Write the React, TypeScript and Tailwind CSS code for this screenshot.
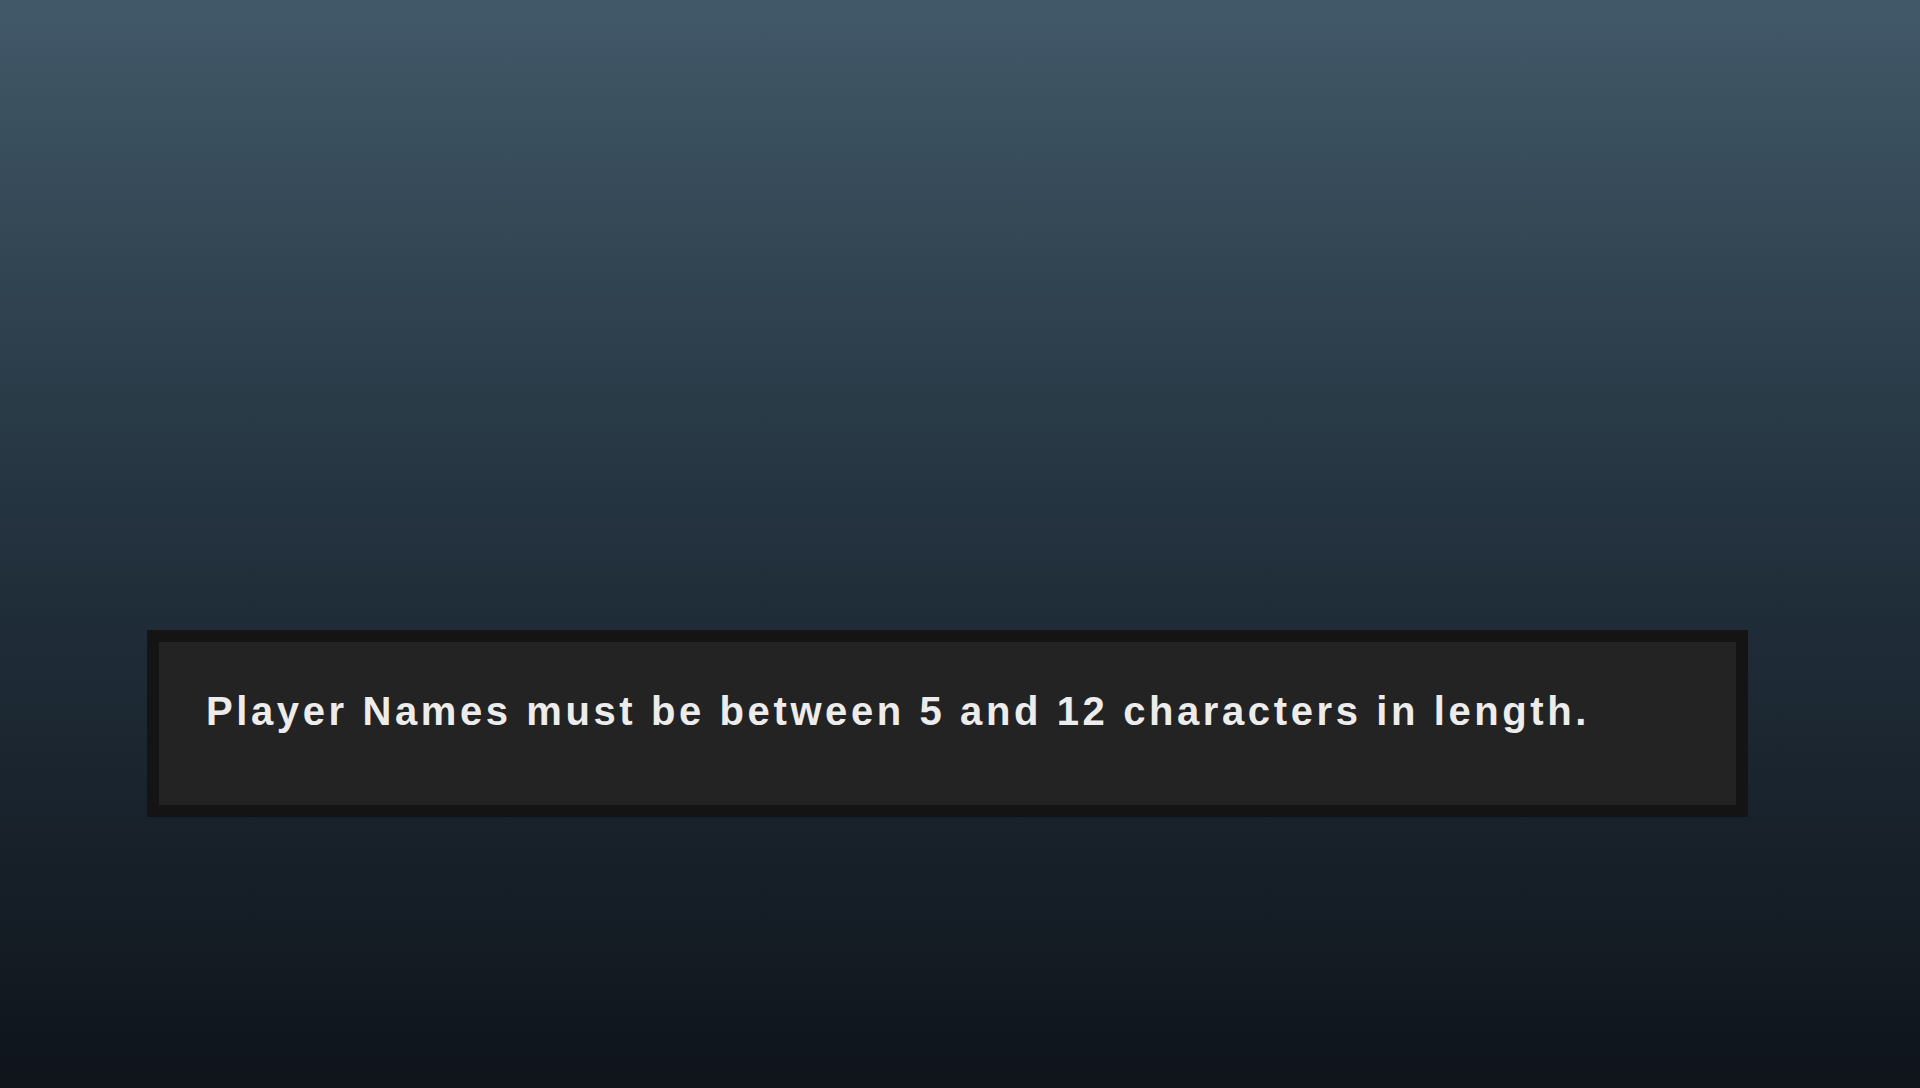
export default function App() {
  return (
    <div className="min-h-[1088px] w-full bg-gradient-to-b from-[#425969] via-[#22313d] to-[#0f141b] pt-[630px] pl-[147px]">
      <div className="w-[1601px] h-[187px] border-[12px] border-[#141414] bg-[#232323] pl-[47px] pt-[49px]">
        <p
          className="text-[40px] leading-none font-bold tracking-[3.6px] text-[#ececec] whitespace-nowrap"
          style={{ fontFamily: '"Liberation Sans", Arial, sans-serif' }}
        >
          Player Names must be between 5 and 12 characters in length.
        </p>
      </div>
    </div>
  );
}
